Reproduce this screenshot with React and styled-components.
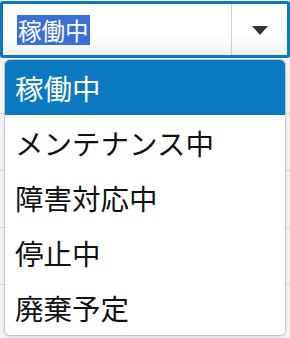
import React, { useState } from "react";
import styled, { createGlobalStyle } from "styled-components";

const statuses = ["稼働中", "メンテナンス中", "障害対応中", "停止中", "廃棄予定"];

const GlobalStyle = createGlobalStyle`
  html, body {
    margin: 0;
    padding: 0;
    background: #f3f3f3;
    font-family: "Noto Sans CJK JP", "Noto Sans", sans-serif;
  }
`;

const App = () => {
  const [selected] = useState(0);

  return (
    <>
      <GlobalStyle />
      <Page>
        <SelectWrap>
          <SelectBox>
            <Value>
              <Highlight>{statuses[selected]}</Highlight>
            </Value>
            <ArrowCell>
              <svg width="16" height="9" viewBox="0 0 16 9">
                <path d="M0 0 L16 0 L8 9 Z" fill="#333" />
              </svg>
            </ArrowCell>
          </SelectBox>
          <Menu>
            {statuses.map((s, i) => (
              <Option key={s} active={i === selected}>
                {s}
              </Option>
            ))}
          </Menu>
        </SelectWrap>
      </Page>
    </>
  );
};

const Page = styled.div`
  width: 290px;
  height: 338px;
  padding-top: 1px;
  box-sizing: border-box;
  background: repeating-linear-gradient(
    to bottom,
    #f3f3f3 0px,
    #f3f3f3 56px,
    #d6d6d6 56px,
    #d6d6d6 57px
  );
`;

const SelectWrap = styled.div`
  position: relative;
`;

const SelectBox = styled.div`
  display: flex;
  height: 57px;
  box-sizing: border-box;
  border: 3px solid #0a79bf;
  border-radius: 3px;
  background: linear-gradient(to bottom, #ffffff 60%, #f2f2f2 100%);
`;

const Value = styled.div`
  flex: 1;
  display: flex;
  align-items: center;
  padding-left: 14px;
  border-right: 1px solid #cfcfcf;
`;

const Highlight = styled.span`
  background: #3b6fd8;
  color: #fff;
  font-size: 23.5px;
  line-height: 30px;
  padding: 0 1px;
`;

const ArrowCell = styled.div`
  width: 55px;
  display: flex;
  align-items: center;
  justify-content: center;
  padding-top: 2px;
`;

const Menu = styled.ul`
  position: absolute;
  top: 58px;
  left: 4px;
  right: 4px;
  margin: 0;
  padding: 0;
  list-style: none;
  background: #fff;
  border: 1px solid #c4c4c4;
  border-radius: 6px;
  overflow: hidden;
  box-shadow: 0 1px 2px rgba(0, 0, 0, 0.1);
`;

const Option = styled.li`
  height: 55px;
  display: flex;
  align-items: center;
  padding-left: 10px;
  font-size: 28.5px;
  color: ${(p) => (p.active ? "#fff" : "#111")};
  background: ${(p) => (p.active ? "#0a79bf" : "#fff")};
`;

export default App;
